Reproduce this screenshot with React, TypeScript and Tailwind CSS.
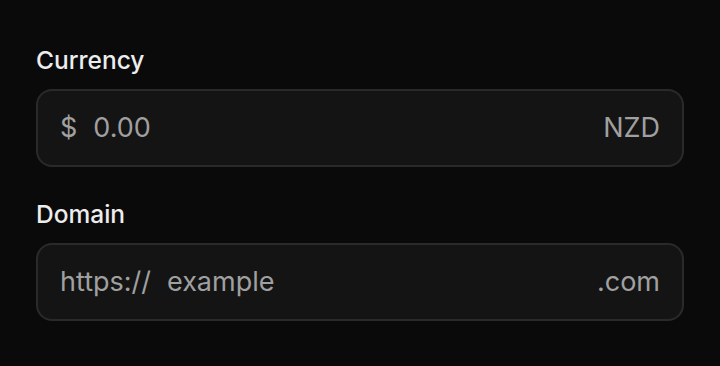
import { useState } from "react";

function AffixField({
  label,
  prefix,
  suffix,
  placeholder,
}: {
  label: string;
  prefix: string;
  suffix: string;
  placeholder: string;
}) {
  const [value, setValue] = useState("");
  return (
    <div className="flex flex-col">
      <label className="mb-[13px] h-[32px] text-[24.5px] leading-[32px] font-medium text-[#ededed]">
        {label}
      </label>
      <div className="flex h-[78px] items-center gap-[16px] rounded-[16px] border-2 border-[#2a2a2a] bg-[#141414] px-[22px]">
        <span className="text-[27px] text-[#a0a0a0]">{prefix}</span>
        <input
          value={value}
          onChange={(e) => setValue(e.target.value)}
          placeholder={placeholder}
          className="min-w-0 flex-1 bg-transparent text-[27px] text-[#ededed] outline-none placeholder:text-[#a0a0a0]"
        />
        <span className="text-[27px] text-[#a0a0a0]">{suffix}</span>
      </div>
    </div>
  );
}

export default function App() {
  return (
    <div
      className="flex min-h-screen flex-col gap-[31px] bg-[#0a0a0a] px-[36px] pt-[44px]"
      style={{ fontFamily: "Inter, 'Noto Sans', sans-serif" }}
    >
      <AffixField label="Currency" prefix="$" suffix="NZD" placeholder="0.00" />
      <AffixField label="Domain" prefix="https://" suffix=".com" placeholder="example" />
    </div>
  );
}
